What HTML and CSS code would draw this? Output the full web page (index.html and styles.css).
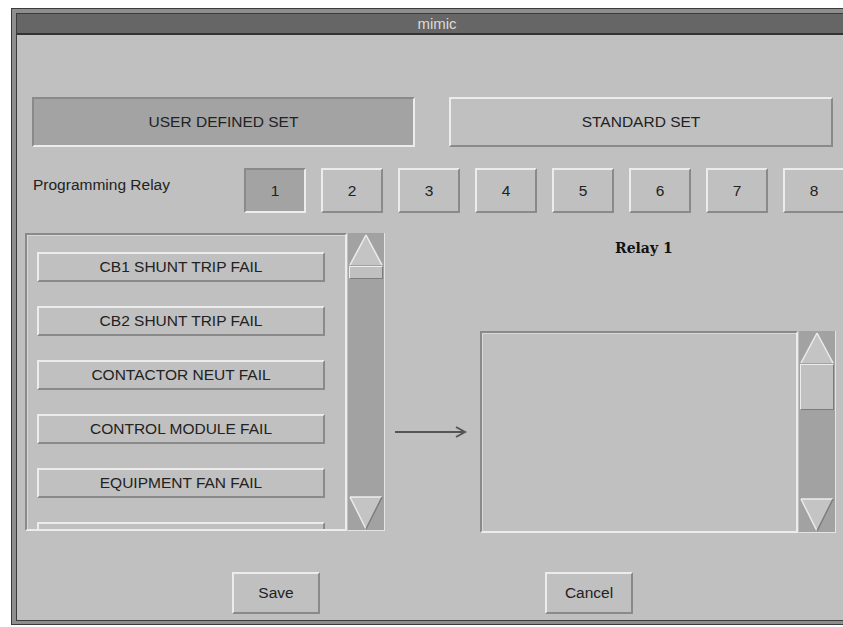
FILE: index.html
```html
<!DOCTYPE html>
<html lang="en">
    <head>
        <meta charset="UTF-8">
        <meta name="viewport" content="width=device-width, initial-scale=1.0">
        <link rel="stylesheet" href="styles.css">
        <title>mimic</title>
    </head>
    <body>
        <div class="window">
            <div class="frame">
                <div class="titlebar">mimic</div>

                <div class="content">
                    <div class="set-row">
                        <button class="btn pressed set-btn">USER DEFINED SET</button>
                        <button class="btn set-btn">STANDARD SET</button>
                    </div>

                    <div class="relay-row">
                        <span class="relay-label">Programming Relay</span>
                        <div class="relay-btns">
                            <button class="btn pressed relay-btn">1</button>
                            <button class="btn relay-btn">2</button>
                            <button class="btn relay-btn">3</button>
                            <button class="btn relay-btn">4</button>
                            <button class="btn relay-btn">5</button>
                            <button class="btn relay-btn">6</button>
                            <button class="btn relay-btn">7</button>
                            <button class="btn relay-btn">8</button>
                        </div>
                    </div>

                    <div class="main-row">
                        <div class="list-widget source">
                            <div class="list-box">
                                <button class="btn item">CB1 SHUNT TRIP FAIL</button>
                                <button class="btn item">CB2 SHUNT TRIP FAIL</button>
                                <button class="btn item">CONTACTOR NEUT FAIL</button>
                                <button class="btn item">CONTROL MODULE FAIL</button>
                                <button class="btn item">EQUIPMENT FAN FAIL</button>
                                <button class="btn item"></button>
                            </div>
                            <div class="scrollbar">
                                <svg class="arrow-up" width="34" height="32" viewBox="0 0 34 32">
                                    <polygon points="17,1 33,31 1,31" fill="#c4c4c4"/>
                                    <line x1="1" y1="31" x2="17" y2="1" stroke="#ececec" stroke-width="1.5"/>
                                    <line x1="17" y1="1" x2="33" y2="31" stroke="#ececec" stroke-width="1.5"/>
                                </svg>
                                <div class="thumb small"></div>
                                <div class="spacer"></div>
                                <svg class="arrow-down" width="34" height="34" viewBox="0 0 34 34">
                                    <polygon points="1,1 33,1 17,33" fill="#c4c4c4"/>
                                    <line x1="1" y1="1" x2="33" y2="1" stroke="#ececec" stroke-width="1.5"/>
                                    <line x1="1" y1="1" x2="17" y2="33" stroke="#ececec" stroke-width="1.5"/>
                                    <line x1="33" y1="1" x2="17" y2="33" stroke="#7c7c7c" stroke-width="1.5"/>
                                </svg>
                            </div>
                        </div>

                        <div class="target">
                            <div class="target-title">Relay 1</div>
                            <div class="target-row">
                                <svg class="move-arrow" width="72" height="14" viewBox="0 0 72 14">
                                    <line x1="0" y1="7" x2="70" y2="7" stroke="#555" stroke-width="2"/>
                                    <polyline points="61,2 70,7 61,12" fill="none" stroke="#555" stroke-width="2"/>
                                </svg>
                                <div class="list-widget dest">
                                    <div class="list-box"></div>
                                    <div class="scrollbar">
                                        <svg class="arrow-up" width="34" height="32" viewBox="0 0 34 32">
                                            <polygon points="17,1 33,31 1,31" fill="#c4c4c4"/>
                                            <line x1="1" y1="31" x2="17" y2="1" stroke="#ececec" stroke-width="1.5"/>
                                            <line x1="17" y1="1" x2="33" y2="31" stroke="#ececec" stroke-width="1.5"/>
                                        </svg>
                                        <div class="thumb large"></div>
                                        <div class="spacer"></div>
                                        <svg class="arrow-down" width="34" height="34" viewBox="0 0 34 34">
                                            <polygon points="1,1 33,1 17,33" fill="#c4c4c4"/>
                                            <line x1="1" y1="1" x2="33" y2="1" stroke="#ececec" stroke-width="1.5"/>
                                            <line x1="1" y1="1" x2="17" y2="33" stroke="#ececec" stroke-width="1.5"/>
                                            <line x1="33" y1="1" x2="17" y2="33" stroke="#7c7c7c" stroke-width="1.5"/>
                                        </svg>
                                    </div>
                                </div>
                            </div>
                        </div>
                    </div>

                    <div class="action-row">
                        <button class="btn action-btn">Save</button>
                        <button class="btn action-btn">Cancel</button>
                    </div>
                </div>
            </div>
        </div>
    </body>
</html>
```

FILE: styles.css
```css
body {
    margin: 0;
    background: #fff;
    overflow: hidden;
    font-family: "Liberation Sans", Arial, sans-serif;
    font-size: 15.5px;
    color: #222;
}

.window {
    box-sizing: border-box;
    width: 846px;
    margin: 8px 0 0 11px;
    padding: 4px 0 3px 4px;
    background: #8e8e8e;
    border: 1px solid #3c3c3c;
    border-right: 0;
}

.frame {
    border: 1px solid #3c3c3c;
    border-right: 0;
}

.titlebar {
    height: 19px;
    line-height: 19px;
    background: #666;
    color: #dcdcdc;
    text-align: center;
    font-size: 15px;
    border-bottom: 2px solid #333;
}

.content {
    height: 585px;
    background: #c0c0c0;
}

/* motif style buttons */
.btn {
    box-sizing: border-box;
    padding: 0;
    font: inherit;
    color: #222;
    background: #c0c0c0;
    border: 2px solid;
    border-color: #ececec #8a8a8a #8a8a8a #ececec;
    flex-shrink: 0;
}

.btn.pressed {
    background: #a3a3a3;
    border-color: #8a8a8a #ececec #ececec #8a8a8a;
}

.set-row {
    display: flex;
    gap: 34px;
    padding: 62px 0 0 15px;
}

.set-btn {
    width: 383px;
    height: 50px;
}

.set-btn + .set-btn {
    width: 384px;
}

.relay-row {
    display: flex;
    margin-top: 21px;
    padding-left: 16px;
}

.relay-label {
    width: 211px;
    padding-top: 8px;
    flex-shrink: 0;
}

.relay-btns {
    display: flex;
    gap: 15px;
}

.relay-btn {
    width: 62px;
    height: 45px;
}

.main-row {
    display: flex;
    margin-top: 20px;
    padding-left: 8px;
}

.list-widget {
    display: flex;
    flex-shrink: 0;
}

.list-widget.source {
    height: 298px;
}

.list-widget.dest {
    height: 202px;
}

.list-box {
    box-sizing: border-box;
    height: 100%;
    overflow: hidden;
    border: 2px solid;
    border-color: #8a8a8a #ececec #ececec #8a8a8a;
    box-shadow: inset 1px 1px 0 #d8d8d8;
}

.source .list-box {
    width: 322px;
    padding: 17px 0 0 10px;
}

.dest .list-box {
    width: 318px;
}

.item {
    display: block;
    width: 288px;
    height: 30px;
    margin-bottom: 24px;
}

.scrollbar {
    box-sizing: border-box;
    width: 38px;
    height: 100%;
    display: flex;
    flex-direction: column;
    align-items: center;
    padding: 1px 0 0;
    background: #a2a2a2;
    border-left: 1px solid #c0c0c0;
    border-right: 1px solid #e4e4e4;
    border-bottom: 1px solid #e4e4e4;
}

.scrollbar svg {
    display: block;
    flex-shrink: 0;
}

.thumb {
    box-sizing: border-box;
    width: 34px;
    background: #c0c0c0;
    border: 1px solid;
    border-color: #ececec #7c7c7c #7c7c7c #ececec;
    flex-shrink: 0;
}

.thumb.small {
    height: 13px;
}

.thumb.large {
    height: 46px;
}

.spacer {
    flex: 1;
}

.target {
    flex: 1;
}

.target-title {
    margin-top: 6px;
    padding-left: 230px;
    line-height: 18px;
    font-family: "DejaVu Serif", "Liberation Serif", serif;
    font-weight: bold;
    font-size: 14px;
    color: #111;
}

.target-row {
    display: flex;
    align-items: center;
    gap: 13px;
    margin-top: 74px;
    padding-left: 10px;
}

.move-arrow {
    display: block;
}

.action-row {
    display: flex;
    gap: 225px;
    margin-top: 39px;
    padding-left: 215px;
}

.action-btn {
    width: 88px;
    height: 42px;
}
```
